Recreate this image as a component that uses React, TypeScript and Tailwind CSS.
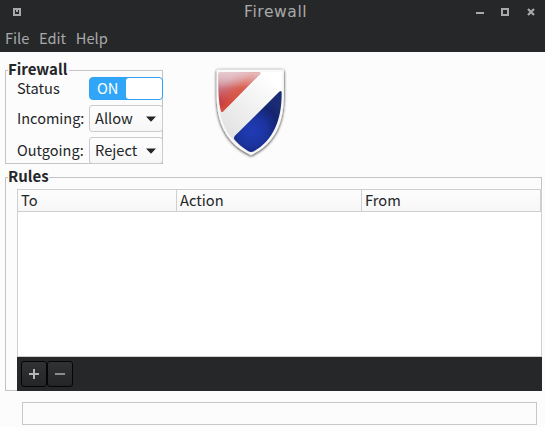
import React from "react";

function Shield() {
  return (
    <svg className="block" width="90" height="105" viewBox="0 0 90 105">
      <defs>
        <linearGradient id="red" gradientUnits="userSpaceOnUse" x1="22" y1="12" x2="22" y2="53">
          <stop offset="0" stopColor="#e0bcc3" />
          <stop offset="0.3" stopColor="#cf8a94" />
          <stop offset="0.6" stopColor="#c25060" />
          <stop offset="0.8" stopColor="#ad2440" />
          <stop offset="1" stopColor="#bf3a44" />
        </linearGradient>
        <linearGradient id="redEdge" gradientUnits="userSpaceOnUse" x1="20" y1="24" x2="36" y2="37">
          <stop offset="0" stopColor="#e0573e" stopOpacity="0" />
          <stop offset="0.75" stopColor="#e0573e" stopOpacity="0.8" />
          <stop offset="1" stopColor="#dc5a48" stopOpacity="0.6" />
        </linearGradient>
        <linearGradient id="sheen" gradientUnits="userSpaceOnUse" x1="0" y1="12" x2="0" y2="28">
          <stop offset="0" stopColor="#e6c8ce" stopOpacity="0.9" />
          <stop offset="1" stopColor="#e6c8ce" stopOpacity="0" />
        </linearGradient>
        <radialGradient id="blue" gradientUnits="userSpaceOnUse" cx="47" cy="71" r="36">
          <stop offset="0" stopColor="#213bb8" />
          <stop offset="0.4" stopColor="#1b349f" />
          <stop offset="0.75" stopColor="#14246f" />
          <stop offset="1" stopColor="#1b2c74" />
        </radialGradient>
        <linearGradient id="body" gradientUnits="userSpaceOnUse" x1="65" y1="18" x2="22" y2="70">
          <stop offset="0" stopColor="#ffffff" />
          <stop offset="0.35" stopColor="#f5f5f5" />
          <stop offset="1" stopColor="#e4e4e4" />
        </linearGradient>
        <filter id="shadow" x="-20%" y="-20%" width="140%" height="140%">
          <feDropShadow dx="0" dy="0.7" stdDeviation="1.4" floodColor="#111" floodOpacity="0.95" />
        </filter>
      </defs>
      <path
        d="M12.8 9.8H77.7Q78.9 9.8 78.9 11V34C78.9 62 71 83 46 95.2C20 83 11.6 62 11.6 34V11Q11.6 9.8 12.8 9.8Z"
        fill="#f8f8f8"
        filter="url(#shadow)"
      />
      <path d="M14 12H76.7V34C76.7 61 69 81 46 92.8C22 81 13.3 61 13.3 34V12Z" fill="url(#body)" />
      <path d="M15.5 12.2H53.5Q56.5 12.2 54.8 14.2L18.5 51Q16.6 53.2 15.8 50C14 43 13.3 34 13.3 25V14.5Q13.3 12.2 15.5 12.2Z" fill="url(#red)" />
      <path d="M15.5 12.2H53.5Q56.5 12.2 54.8 14.2L18.5 51Q16.6 53.2 15.8 50C14 43 13.3 34 13.3 25V14.5Q13.3 12.2 15.5 12.2Z" fill="url(#redEdge)" />
      <path d="M15.5 12.2H53.5Q56.5 12.2 54.8 14.2L41 28H13.3V14.5Q13.3 12.2 15.5 12.2Z" fill="url(#sheen)" />
      <path d="M74.2 31.8Q76.7 29.8 76.7 33C76.7 60 68.5 80 49 91.3Q46 93 43 91C38 88 33.5 84 29.8 80Q28 77.8 30.2 75.6Z" fill="url(#blue)" />
    </svg>
  );
}

function Combo({ value }: { value: string }) {
  return (
    <div className="flex h-[27px] w-[74px] items-center justify-between rounded-[3px] border border-[#cbcbcb] bg-linear-to-b from-[#fdfdfd] to-[#f7f7f7] pr-[6px] pl-[5px]">
      <span className="-mt-[2px] leading-6">{value}</span>
      <svg className="block" width="10" height="6" viewBox="0 0 10 6">
        <path d="M0 0.5H10L5 5.7Z" fill="#222427" />
      </svg>
    </div>
  );
}

function ToolButton({ plus }: { plus?: boolean }) {
  return (
    <button className="flex h-[26px] w-[26px] items-center justify-center rounded-[3px] border border-[#050505] bg-linear-to-b from-[#303234] to-[#232527]">
      <svg width="10" height="10" viewBox="0 0 10 10">
        <path d={plus ? "M0 4H10V6H0ZM4 0H6V10H4Z" : "M0 4H10V6H0Z"} fill={plus ? "#b5b5b5" : "#8b8c8d"} />
      </svg>
    </button>
  );
}

export default function App() {
  return (
    <div className="h-[427px] w-[545px] overflow-hidden bg-[#fcfcfc] font-['Noto_Sans_CJK_SC',sans-serif] text-[14.67px] text-[#242628]">
      <header className="h-[52px] bg-[#252729] text-[#a9a9a9]">
        <div className="flex h-6 items-center pr-[10px] pl-[13px]">
          <svg width="8" height="8" viewBox="0 0 8 8" shapeRendering="crispEdges">
            <path fillRule="evenodd" d="M0 0H8V8H0ZM2 2V6H6V2H5V4H3V2Z" fill="#a9a9a9" />
          </svg>
          <h1 className="ml-[223px] w-[100px] font-['DejaVu_Sans',sans-serif] text-[15.5px] leading-6 tracking-[0.6px]">Firewall</h1>
          <svg className="ml-auto" width="59" height="8" viewBox="0 0 59 8">
            <path d="M0 4H8V6H0Z" fill="#a9a9a9" />
            <path fillRule="evenodd" d="M25 0H33V8H25ZM27 2V6H31V2Z" fill="#a9a9a9" />
            <path d="M52 1L58 7M58 1L52 7" stroke="#a9a9a9" strokeWidth="2.2" />
          </svg>
        </div>
        <nav className="flex h-7 gap-[9.6px] pl-[5px] leading-[28px]">
          <span>File</span>
          <span>Edit</span>
          <span>Help</span>
        </nav>
      </header>

      <main className="pl-[5px]">
        <div className="flex h-[112px] pt-2">
          <section className="mt-[10px] h-[94px] w-[158px] border border-[#c3c3c3]">
            <h2 className="-mt-[14px] ml-[2px] h-[24px] w-[61px] bg-[#fcfcfc] text-[15px] font-bold leading-6">Firewall</h2>
            <div className="-mt-[4px] grid grid-cols-[72px_74px] grid-rows-[23px_32px_32px] pl-[11px]">
              <span className="leading-[22px]">Status</span>
              <div className="flex h-[23px] w-[74px] rounded-[4px] border border-[#2ea3f5] bg-[#31a6f9] text-white">
                <span className="w-[36px] pl-[7px] leading-[19px]">ON</span>
                <span className="flex-1 rounded-[3px] bg-white" />
              </div>
              <span className="pt-[5px] text-[14.5px] leading-[26px]">Incoming:</span>
              <div className="pt-[5px]"><Combo value="Allow" /></div>
              <span className="pt-[5px] text-[14.5px] leading-[26px]">Outgoing:</span>
              <div className="pt-[5px]"><Combo value="Reject" /></div>
            </div>
          </section>
          <div className="ml-[42px]"><Shield /></div>
        </div>

        <section className="mt-[13px] h-[214px] w-[537px] border border-[#c3c3c3] pl-[11px]">
          <h2 className="-mt-[14px] -ml-[9px] mb-px h-6 w-[41px] bg-[#fcfcfc] text-[15px] font-bold leading-6">Rules</h2>
          <div className="w-[525px]">
            <div className="h-[168px] border border-[#cfcfcf] bg-white">
              <div className="grid h-[22px] grid-cols-[159px_185px_179px] border-b border-[#cfcfcf] bg-linear-to-b from-[#fdfdfd] to-[#f7f7f7] leading-[20px]">
                <span className="border-r border-[#cfcfcf] pl-[3px]">To</span>
                <span className="border-r border-[#cfcfcf] pl-[3px]">Action</span>
                <span className="border-r border-[#cfcfcf] pl-[3px]">From</span>
              </div>
            </div>
            <div className="flex h-[34px] bg-[#252729] pt-1 pl-1">
              <ToolButton plus />
              <ToolButton />
            </div>
          </div>
        </section>

        <div className="mt-[11px] ml-[17px] h-[23px] w-[515px] border border-[#c8c8c8]" />
      </main>
    </div>
  );
}
